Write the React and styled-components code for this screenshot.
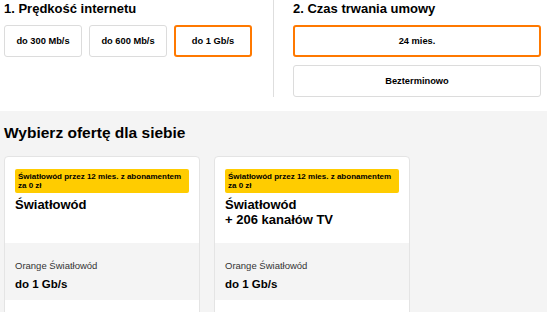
import styled, { createGlobalStyle } from 'styled-components';

const GlobalStyle = createGlobalStyle`
  * {
    box-sizing: border-box;
  }

  body {
    margin: 0;
    font-family: 'Liberation Sans', Arial, sans-serif;
    color: #000;
    background: #f4f4f4;
  }
`;

const TopSection = styled.section`
  display: flex;
  background: #fff;
  padding-bottom: 14px;
`;

const Column = styled.div`
  display: flex;
  flex-direction: column;
  height: 97px;
  padding-top: 1px;
`;

const SpeedColumn = styled(Column)`
  width: 273px;
  padding-left: 4px;
`;

const DurationColumn = styled(Column)`
  width: 274px;
  border-left: 1px solid #dedede;
  padding-left: 19px;
  padding-right: 6px;
`;

const StepTitle = styled.h2`
  margin: 0 0 9px;
  font-size: 13px;
  line-height: 15px;
  font-weight: 700;
`;

const OptionRow = styled.div`
  display: flex;
  gap: 7px;
`;

const OptionStack = styled.div`
  display: flex;
  flex-direction: column;
  gap: 8px;
`;

const Option = styled.button`
  display: flex;
  align-items: center;
  justify-content: center;
  width: ${({ $wide }) => ($wide ? '248px' : '78px')};
  height: 32px;
  padding: 0;
  background: #fff;
  border: ${({ $active }) => ($active ? '2px solid #ff7900' : '1px solid #dcdcdc')};
  border-radius: 3px;
  font-family: inherit;
  font-size: 9.3px;
  font-weight: 700;
  color: #000;
  cursor: pointer;
`;

const OffersSection = styled.section`
  padding: 13px 4px 0;
`;

const OffersTitle = styled.h1`
  margin: 0 0 14px;
  font-size: 15.5px;
  line-height: 18px;
  font-weight: 700;
`;

const CardRow = styled.div`
  display: flex;
  gap: 14px;
`;

const Card = styled.article`
  width: 196px;
  background: #fff;
  border: 1px solid #e4e4e4;
  border-radius: 4px;
  overflow: hidden;
`;

const CardHeader = styled.div`
  height: 86px;
  padding: 12px 10px 0;
`;

const Badge = styled.div`
  background: #ffcc00;
  border-radius: 2px;
  padding: 2.5px 3px;
  font-size: 8px;
  line-height: 9.5px;
  font-weight: 700;
`;

const CardTitle = styled.h3`
  margin: 4px 0 0;
  font-size: 13px;
  line-height: 15px;
  font-weight: 700;
`;

const CardSpecs = styled.div`
  background: #f4f4f4;
  padding: 16px 10px 9px;
`;

const SpecLabel = styled.div`
  font-size: 9.5px;
  line-height: 13px;
  color: #333;
`;

const SpecValue = styled.div`
  margin-top: 5px;
  font-size: 11.5px;
  line-height: 14px;
  font-weight: 700;
`;

const CardFooter = styled.div`
  height: 60px;
`;

const speeds = ['do 300 Mb/s', 'do 600 Mb/s', 'do 1 Gb/s'];
const durations = ['24 mies.', 'Bezterminowo'];

const offers = [
  { id: 1, title: ['Światłowód'] },
  { id: 2, title: ['Światłowód', '+ 206 kanałów TV'] },
];

const App = () => {
  const speed = 'do 1 Gb/s';
  const duration = '24 mies.';

  return (
    <>
      <GlobalStyle />
      <TopSection>
        <SpeedColumn>
          <StepTitle>1. Prędkość internetu</StepTitle>
          <OptionRow>
            {speeds.map((s) => (
              <Option key={s} $active={s === speed}>
                {s}
              </Option>
            ))}
          </OptionRow>
        </SpeedColumn>
        <DurationColumn>
          <StepTitle>2. Czas trwania umowy</StepTitle>
          <OptionStack>
            {durations.map((d) => (
              <Option key={d} $wide $active={d === duration}>
                {d}
              </Option>
            ))}
          </OptionStack>
        </DurationColumn>
      </TopSection>

      <OffersSection>
        <OffersTitle>Wybierz ofertę dla siebie</OffersTitle>
        <CardRow>
          {offers.map((offer) => (
            <Card key={offer.id}>
              <CardHeader>
                <Badge>Światłowód przez 12 mies. z abonamentem za 0 zł</Badge>
                <CardTitle>
                  {offer.title.map((line) => (
                    <div key={line}>{line}</div>
                  ))}
                </CardTitle>
              </CardHeader>
              <CardSpecs>
                <SpecLabel>Orange Światłowód</SpecLabel>
                <SpecValue>do 1 Gb/s</SpecValue>
              </CardSpecs>
              <CardFooter />
            </Card>
          ))}
        </CardRow>
      </OffersSection>
    </>
  );
};

export default App;
